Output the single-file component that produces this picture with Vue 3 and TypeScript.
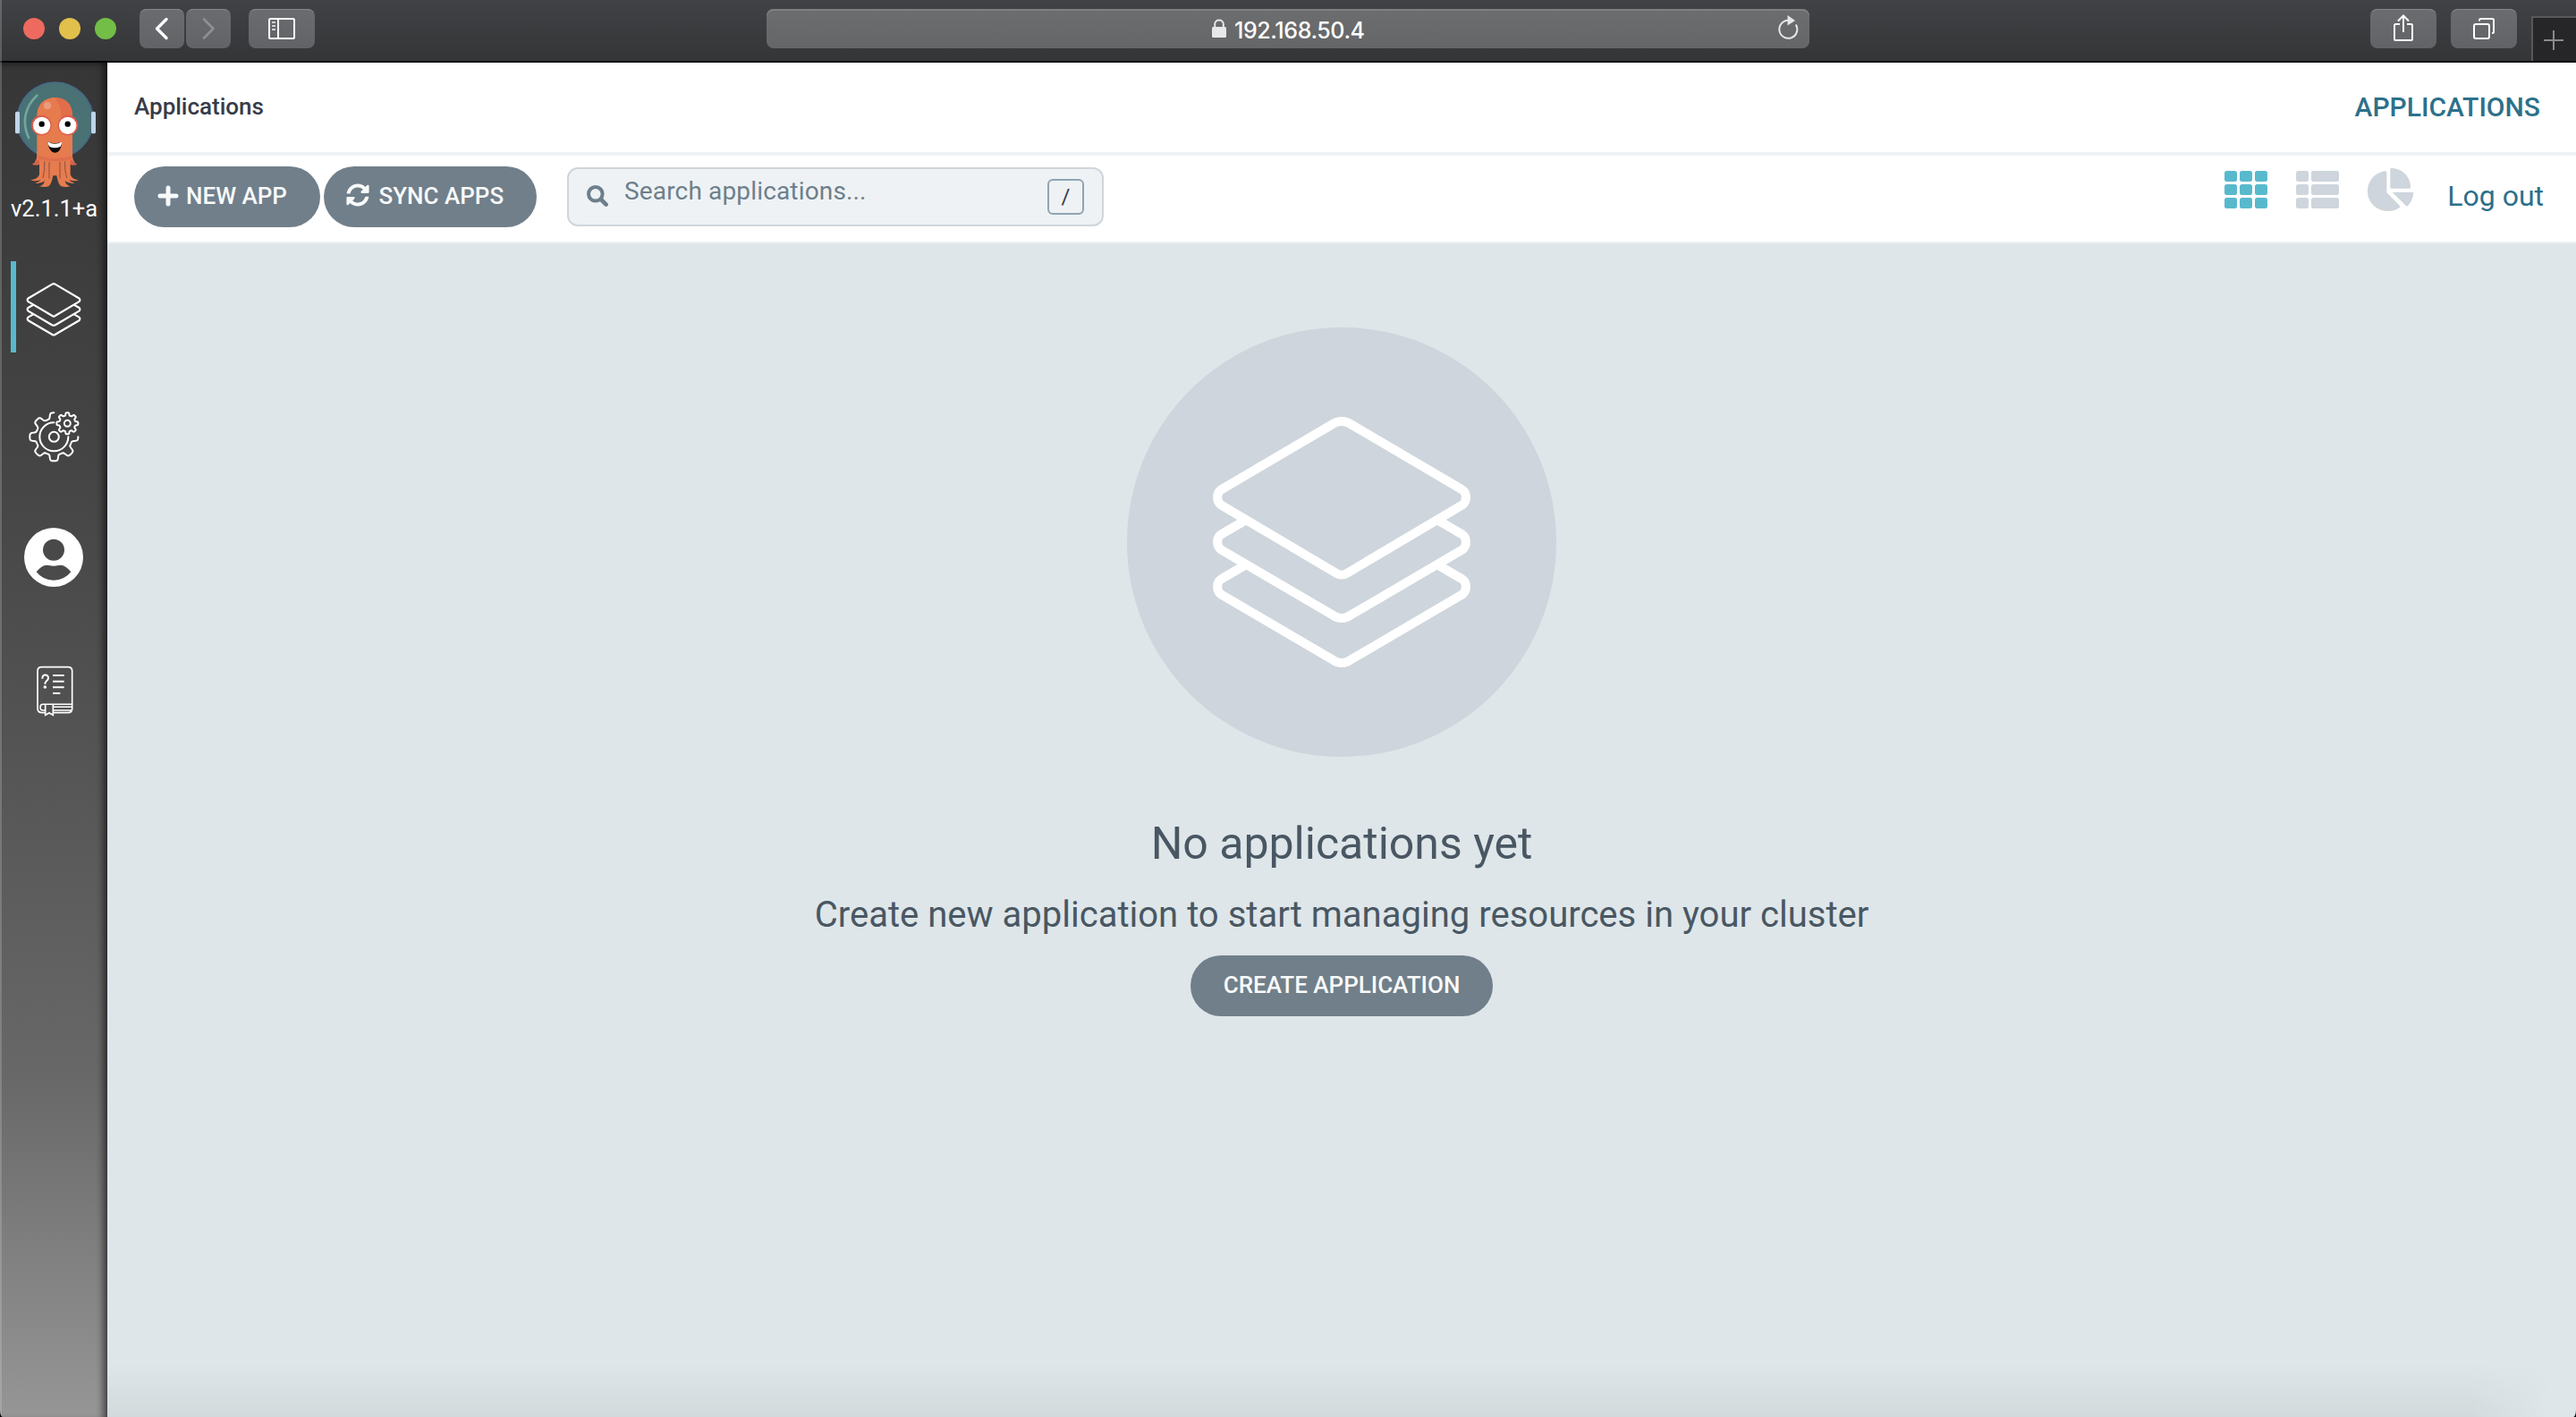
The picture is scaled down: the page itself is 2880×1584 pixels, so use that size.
<script setup lang="ts">
// Outline of a toothed wheel between two angles (degrees, clockwise from the right).
function gear(cx: number, cy: number, root: number, tip: number, teeth: number, from: number, to: number): string {
  const mid = (root + tip) / 2
  const amp = (tip - root) / 2
  const points: string[] = []
  for (let a = from; a <= to; a += 1.5) {
    const t = (a * Math.PI) / 180
    const r = mid + (amp * Math.tanh(2.6 * Math.cos(teeth * t))) / Math.tanh(2.6)
    points.push(`${(cx + r * Math.cos(t)).toFixed(1)} ${(cy + r * Math.sin(t)).toFixed(1)}`)
  }
  return 'M' + points.join('L')
}

const bigGear = gear(84, 84, 61, 81, 8, 0, 270)
const smallGear = gear(129, 39, 27, 36, 8, 0, 360) + 'Z'

const layers = [
  'M752 371C768 360 792 360 808 371L1184 592C1201 603 1201 631 1184 644L797 873C787 879 773 879 763 873L376 644C359 631 359 603 376 592Z',
  'M462 692L376 742C359 753 359 781 376 794L752 1014C768 1026 792 1026 808 1014L1184 794C1201 781 1201 753 1184 742L1098 692',
  'M462 842L376 892C359 903 359 931 376 944L752 1164C768 1176 792 1176 808 1164L1184 944C1201 931 1201 903 1184 892L1098 842',
]

const cells = [0, 1, 2].flatMap((row) => [0, 1, 2].map((col) => ({ x: col * 17, y: row * 15 })))
</script>

<template>
  <div class="window">
    <header class="chrome">
      <div class="lights">
        <i class="light red"></i><i class="light yellow"></i><i class="light green"></i>
      </div>
      <div class="history">
        <button class="key small">
          <svg width="50" height="44" viewBox="0 0 50 44" fill="none" stroke="#fff" stroke-width="3.4" stroke-linecap="round" stroke-linejoin="round"><path d="M30 11.5L19.5 22L30 32.5" /></svg>
        </button>
        <button class="key small">
          <svg width="50" height="44" viewBox="0 0 50 44" fill="none" stroke="#8e8f91" stroke-width="2.8" stroke-linecap="round" stroke-linejoin="round"><path d="M20 11.5L30.5 22L20 32.5" /></svg>
        </button>
      </div>
      <button class="key">
        <svg width="74" height="44" viewBox="0 0 74 44" fill="none" stroke="#fff" stroke-width="2"><rect x="23" y="11" width="28" height="22" rx="1.5" /><path d="M33 11V33" /><path d="M26 15H30M26 19H30M26 23H30" stroke="#d0d0d1" /></svg>
      </button>
      <div class="address">
        <svg class="lock" width="16" height="22" viewBox="0 0 16 22"><path d="M3.2 10V6.2C3.2 0 12.8 0 12.8 6.2V10" fill="none" stroke="#e8e8e8" stroke-width="2" /><rect x="0" y="9" width="16" height="12" rx="1.5" fill="#e8e8e8" /></svg>
        <span class="url">192.168.50.4</span>
        <svg class="reload" width="26" height="30" viewBox="0 0 26 30"><path d="M20.8 12.5A10 10 0 1 1 12 7.8" fill="none" stroke="#e6e6e6" stroke-width="2" /><path d="M11.5 2L20 8L11.5 13.5Z" fill="#e6e6e6" /></svg>
      </div>
      <div class="actions">
        <button class="key">
          <svg width="74" height="44" viewBox="0 0 74 44" fill="none" stroke="#fff" stroke-width="2"><path d="M33 17H28.5Q27 17 27 18.5V33.5Q27 35 28.5 35H45.5Q47 35 47 33.5V18.5Q47 17 45.5 17H41" /><path d="M37 26V8M31 13.5L37 7.5L43 13.5" /></svg>
        </button>
        <button class="key">
          <svg width="74" height="44" viewBox="0 0 74 44" fill="none" stroke="#fff" stroke-width="2"><rect x="26" y="17" width="17" height="16" rx="2" /><path d="M32 13.5V12.5Q32 11 33.5 11H46.5Q48 11 48 12.5V25.5Q48 27 46.5 27H46" /></svg>
        </button>
      </div>
      <div class="new-tab">
        <svg width="48" height="49" viewBox="0 0 48 49" stroke="#8c8a89" stroke-width="2"><path d="M12 25H34M23 14V36" /></svg>
      </div>
    </header>

    <div class="body">
      <aside class="sidebar">
        <svg class="logo" width="94" height="124" viewBox="0 0 282 372">
          <circle cx="137" cy="136" r="127" fill="#4a7173" stroke="#46698a" stroke-width="5" />
          <rect x="3" y="107" width="15" height="74" rx="5" fill="#c0d4e9" />
          <rect x="258" y="107" width="15" height="74" rx="5" fill="#c0d4e9" />
          <path d="M76 240Q79 275 60 284Q72 288 84 284V318Q80 334 54 337Q70 343 90 336Q82 344 70 347Q86 351 102 340Q98 355 84 358Q105 362 116 357C124 350 127 336 130 322H142C145 336 148 350 156 357Q170 362 188 358Q174 355 170 340Q186 351 202 347Q190 344 182 336Q202 343 216 337Q192 334 188 318V284Q200 288 210 284Q192 275 195 240Z" fill="#e67b4e" />
          <path d="M78 262Q76 280 60 284Q74 289 84 284V265ZM193 262Q195 280 210 284Q196 289 188 284V265Z" fill="#d6614d" />
          <path d="M101 274Q103 306 96 330M117 276V332M153 276V332M170 274Q168 306 176 330" fill="none" stroke="#8a5140" stroke-width="3" />
          <path d="M76 270V120C76 40 195 40 195 120V270Q136 280 76 270Z" fill="#e67b4e" />
          <path d="M136 60C176 60 195 86 195 120V140H158Q160 90 136 60Z" fill="#e16d4a" />
          <path d="M80 254Q137 274 194 254V266Q137 282 80 266Z" fill="#dd6b4f" opacity=".8" />
          <circle cx="111" cy="87" r="13" fill="#eb9a7e" />
          <path d="M76 53C36 90 24 142 48 195" fill="none" stroke="#75a5a1" stroke-width="8" stroke-linecap="round" />
          <circle cx="91" cy="153" r="34" fill="#dd5b4a" /><circle cx="180" cy="153" r="34" fill="#dd5b4a" />
          <circle cx="92" cy="154" r="29" fill="#fff" /><circle cx="179" cy="154" r="29" fill="#fff" />
          <circle cx="92" cy="149" r="9.5" /><circle cx="179" cy="149" r="9.5" />
          <path d="M112 208Q136 220 160 208Q156 246 136 245Q116 245 112 208Z" fill="#0b0b0b" />
          <path d="M112 208Q136 223 160 208Q159 218 155 224Q136 234 117 224Q113 218 112 208Z" fill="#fff" />
        </svg>
        <div class="version">v2.1.1+a</div>
        <nav class="nav">
          <a class="nav-item active">
            <svg width="62" height="62" viewBox="340 330 880 880" fill="none" stroke="#fff" stroke-width="31"><path v-for="d in layers" :key="d" :d="d" /></svg>
          </a>
          <a class="nav-item gears">
            <svg width="57" height="57" viewBox="-1 -1 171 171" fill="none" stroke="#fff" stroke-width="6" stroke-linejoin="round" stroke-linecap="round">
              <path :d="bigGear" /><path d="M84 36A48 48 0 1 0 132 84" /><circle cx="84" cy="84" r="16.5" />
              <path :d="smallGear" /><circle cx="129" cy="39" r="10.5" />
            </svg>
          </a>
          <a class="nav-item user">
            <svg width="66" height="66" viewBox="0 0 198 198"><path fill="#fff" fill-rule="evenodd" d="M99 0A99 99 0 1 0 99 198A99 99 0 1 0 99 0ZM99 38A36 36 0 1 1 99 110A36 36 0 1 1 99 38ZM41 148Q59 125 75 125C85 125 90 128 99 128C108 128 113 125 123 125Q139 125 157 148Q135 176 99 176Q63 176 41 148Z" /></svg>
          </a>
          <a class="nav-item docs">
            <svg width="42" height="57" viewBox="0 0 126 171" fill="none" stroke="#fff" stroke-width="5">
              <path d="M30 158H22Q6 158 6 144V18Q6 5 20 5H108Q122 5 122 18V144Q122 158 108 158H60" />
              <path d="M122 130H24C12 130 12 150 24 150H30M60 139H122M60 150H122" stroke-width="4.5" />
              <path d="M32 130V166L45 159L58 166V130" />
              <path d="M22 44C22 27 42 28 42 42C42 52 31 50 31 62" stroke-width="6" /><circle cx="31" cy="72" r="5.5" fill="#fff" stroke="none" />
              <path d="M57 33H95M57 53H95M57 73H95M57 93H82" stroke-width="6" />
            </svg>
          </a>
        </nav>
      </aside>

      <main class="main">
        <div class="topbar">
          <span class="crumb">Applications</span>
          <span class="section">APPLICATIONS</span>
        </div>
        <div class="toolbar">
          <button class="pill new">
            <svg width="24" height="24" viewBox="0 0 24 24" stroke="#f8f9f9" stroke-width="5" stroke-linecap="round"><path d="M3 12H21M12 3V21" /></svg>
            <span>NEW APP</span>
          </button>
          <button class="pill sync">
            <svg width="26" height="26" viewBox="0 0 512 512" fill="#f8f9f9"><path d="M370.72 133.28C339.458 104.008 298.888 87.962 255.848 88c-77.458.068-144.328 53.178-162.791 126.85-1.344 5.363-6.122 9.15-11.651 9.15H24.103c-7.498 0-13.194-6.807-11.807-14.176C33.933 94.924 134.813 8 256 8c66.448 0 126.791 26.136 171.315 68.685L463.03 40.97C478.149 25.851 504 36.559 504 57.941V192c0 13.255-10.745 24-24 24H345.941c-21.382 0-32.09-25.851-16.971-40.971l41.75-41.749zM32 296h134.059c21.382 0 32.09 25.851 16.971 40.971l-41.75 41.75c31.262 29.273 71.835 45.319 114.876 45.28 77.418-.07 144.315-53.144 162.787-126.849 1.344-5.363 6.122-9.15 11.651-9.15h57.304c7.498 0 13.194 6.807 11.807 14.176C478.067 417.076 377.187 504 256 504c-66.448 0-126.791-26.136-171.315-68.685L48.97 471.03C33.851 486.149 8 475.441 8 454.059V320c0-13.255 10.745-24 24-24z" /></svg>
            <span>SYNC APPS</span>
          </button>
          <div class="search">
            <svg width="24" height="24" viewBox="0 0 24 24" fill="none" stroke="#6d7f8b"><circle cx="9.8" cy="9.8" r="7.8" stroke-width="4" /><path d="M16 16L21.6 21.6" stroke-width="4.6" stroke-linecap="round" /></svg>
            <span class="placeholder">Search applications...</span>
            <kbd class="slash">/</kbd>
          </div>
          <div class="views">
            <svg width="48" height="42" viewBox="0 0 48 42" fill="#58b9cd"><rect v-for="c in cells" :key="c.x + '-' + c.y" :x="c.x" :y="c.y" width="14" height="12" rx="2.5" /></svg>
            <svg width="48" height="42" viewBox="0 0 48 42" fill="#ced5dc"><template v-for="y in [0, 15, 30]" :key="y"><rect x="0" :y="y" width="14" height="12" rx="2.5" /><rect x="17" :y="y" width="31" height="12" rx="2.5" /></template></svg>
            <svg class="pie" width="52" height="48" viewBox="0 0 156 144" fill="#ced5dc"><path d="M60 10Q64 10 64 14V82L108 126Q111 130 107 132Q92 144 68 144C30 144 0 114 0 78C0 40 28 13 60 10Z" /><path d="M79 0C116 0 144 29 144 64Q144 68 140 68H80Q76 68 76 64V3Q76 0 79 0Z" /><path d="M83 81H150Q154 81 154 85Q151 109 135 126Q132 129 129 126Z" /></svg>
          </div>
          <a class="logout">Log out</a>
        </div>

        <section class="empty">
          <div class="badge">
            <svg width="290" height="290" viewBox="345 330 870 870" fill="none" stroke="#fff" stroke-width="30"><path v-for="d in layers" :key="d" :d="d" /></svg>
          </div>
          <h4 class="title">No applications yet</h4>
          <h5 class="subtitle">Create new application to start managing resources in your cluster</h5>
          <button class="pill create"><span>CREATE APPLICATION</span></button>
        </section>
      </main>
    </div>
  </div>
</template>

<style>
html, body { margin: 0; background: #000; }
</style>

<style scoped>
* { box-sizing: border-box; }
svg { display: block; flex: none; }
button { border: 0; padding: 0; margin: 0; font: inherit; flex: none; }
.window { width: 2880px; height: 1584px; overflow: hidden; display: flex; flex-direction: column; font-family: Roboto, "Liberation Sans", sans-serif; border-radius: 0 0 3px 3px / 0 0 8px 8px; position: relative; }
.window::before { content: ""; position: absolute; left: 0; top: 0; bottom: 0; width: 2px; background: rgba(255, 255, 255, .2); z-index: 2; }

.chrome { height: 70px; flex: none; display: flex; align-items: flex-start; padding: 10px 0 0 26px; background: linear-gradient(#414245, #343537 68px); border-bottom: 2px solid #020202; }
.lights { display: flex; gap: 16px; padding-top: 10px; }
.light { width: 24px; height: 24px; border-radius: 50%; }
.red { background: #ee6a5f; }
.yellow { background: #e1c04c; }
.green { background: #72be47; }
.history { display: flex; gap: 2px; margin: 0 20px 0 26px; }
.key { width: 74px; height: 44px; border-radius: 8px; background: linear-gradient(#6b6c6f, #626366); box-shadow: inset 0 2px 0 -1px #87888a; }
.key.small { width: 50px; }
.address { width: 1166px; height: 44px; margin-left: 505px; border-radius: 8px; background: linear-gradient(#6c6d6f, #656668); box-shadow: inset 0 2px 0 #7f8082; display: flex; align-items: flex-start; padding-top: 11px; flex: none; }
.lock { margin-left: 498px; }
.url { font-family: Inter, "Liberation Sans", sans-serif; font-size: 25px; font-weight: 500; line-height: 26px; color: #fff; margin: 0 0 0 9px; width: 161px; letter-spacing: -.4px; white-space: nowrap; }
.reload { margin-left: 446px; margin-top: -6px; }
.actions { display: flex; gap: 16px; margin-left: 627px; }
.new-tab { width: 50px; height: 50px; margin: 8px 0 0 16px; border-left: 2px solid #56585b; border-top: 2px solid #56585b; background: #262628; flex: none; }

.body { display: flex; flex: 1; }
.sidebar { width: 120px; flex: none; display: flex; flex-direction: column; align-items: flex-start; background: linear-gradient(#363636, #454545 30%, #525252 48%, #686868 75%, #808080 88%, #969696); box-shadow: inset -10px 0 8px -6px rgba(0, 0, 0, .6), inset 0 6px 6px -4px rgba(0, 0, 0, .35); }
.logo { margin: 19px 0 0 16px; }
.version { margin: 5px 0 0 12px; width: 96px; height: 30px; overflow: hidden; white-space: nowrap; color: #fff; font-size: 25.5px; line-height: 30px; }
.nav { display: flex; flex-direction: column; width: 108px; margin: 44px 0 0 12px; }
.nav-item { height: 102px; display: flex; justify-content: center; align-items: center; padding-right: 12px; }
.nav-item.active { border-left: 6px solid #58b9cd; padding-right: 18px; padding-top: 5px; }
.gears { margin-top: 43px; }
.user { margin-top: 33px; }
.docs { margin-top: 47px; padding-right: 10px; }

.main { flex: 1; display: flex; flex-direction: column; background: #dee6e9; }
.topbar { height: 104px; background: #fff; border-bottom: 4px solid #eef2f5; display: flex; justify-content: space-between; align-items: center; padding: 0 40px 2px 30px; }
.crumb { font-size: 26px; font-weight: 500; color: #363c4a; }
.section { font-size: 30px; font-weight: 500; color: #2d708a; }
.toolbar { height: 98px; background: #fff; border-bottom: 2px solid #eef2f5; display: flex; align-items: flex-start; padding: 12px 36px 0 30px; }
.pill { height: 68px; border-radius: 34px; background: #707f8a; color: #f8f9f9; font-size: 26px; font-weight: 500; line-height: 66px; display: flex; align-items: center; white-space: nowrap; }
.pill span { height: 68px; }
.new { width: 208px; padding-left: 26px; gap: 8px; }
.new svg { margin-top: -3px; }
.sync { width: 238px; padding-left: 25px; gap: 10.5px; margin-left: 4px; }
.sync svg { margin-top: -4px; }
.search { width: 600px; height: 66px; margin: 1px 0 0 34px; border: 2px solid #ced5dc; border-radius: 12px; background: #eef2f5; display: flex; align-items: flex-start; padding: 11px 20px 0 19.5px; flex: none; }
.search svg { margin-top: 7px; }
.placeholder { margin-left: 18.5px; font-size: 28px; line-height: 28px; letter-spacing: .16px; color: #6d7f8b; }
.slash { margin-left: auto; width: 41px; height: 40px; border: 2px solid #8fa4b1; border-radius: 6px; font: 24px/37px Roboto, sans-serif; text-align: center; color: #363c4a; }
.views { display: flex; gap: 32px; margin: 5px 0 0 auto; }
.pie { margin-top: -3px; }
.logout { margin-left: 37.5px; font-size: 32px; line-height: 66px; color: #2d708a; white-space: nowrap; }

.empty { flex: 1; display: flex; flex-direction: column; align-items: center; padding-top: 94px; position: relative; }
/* Soft shade along the bottom edge, fading out before the right side. */
.empty::after { content: ""; position: absolute; left: 0; right: 0; bottom: 0; height: 60px; background: linear-gradient(transparent, rgba(120, 120, 120, .11)); mask-image: linear-gradient(to right, #000 calc(100% - 120px), transparent calc(100% - 30px)); }
.badge { width: 480px; height: 480px; border-radius: 50%; background: #ced5dc; display: flex; justify-content: center; padding-top: 94px; }
.title { margin: 67px 0 0; font-size: 50px; line-height: 60px; font-weight: 400; color: #495763; }
.subtitle { margin: 25px 0 0; font-size: 40px; line-height: 50px; font-weight: 400; letter-spacing: .015px; color: #495763; }
.create { width: 338px; justify-content: center; margin-top: 20px; }
</style>
